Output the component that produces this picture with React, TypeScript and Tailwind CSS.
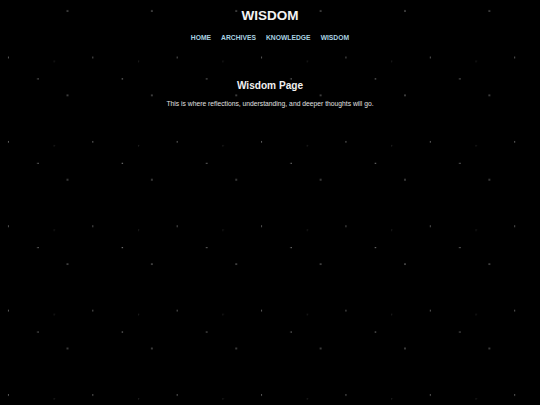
const links = ['HOME', 'ARCHIVES', 'KNOWLEDGE', 'WISDOM'];

export default function App() {
  return (
    <div className="min-h-screen bg-black bg-[radial-gradient(0.8px_1.3px_at_67.5px_11px,#d0d0d0,transparent),radial-gradient(1px_1px_at_8.5px_57.5px,#aaaaaa,transparent),radial-gradient(0.8px_0.8px_at_54.5px_61.5px,#777777,transparent),radial-gradient(1.1px_0.9px_at_38px_79px,#aaaaaa,transparent)] bg-size-[84.375px_84.375px] font-['Liberation_Sans',Arial,sans-serif] text-center">
      <header className="pt-[8px]">
        <h1 className="text-[13.5px] leading-[16px] font-bold text-[#f2f2f2]">WISDOM</h1>
        <nav className="mt-[10px] flex justify-center gap-[10px] text-[6.75px] leading-[8px] font-bold text-[#a9d2e0]">
          {links.map((l) => (
            <a key={l} href="#">
              {l}
            </a>
          ))}
        </nav>
      </header>
      <main>
        <h2 className="mt-[38px] text-[10.125px] leading-[12px] font-bold text-[#f0f0f0]">Wisdom Page</h2>
        <p className="mt-[8px] text-[6.75px] leading-[8px] text-[#e0e0e0]">
          This is where reflections, understanding, and deeper thoughts will go.
        </p>
      </main>
    </div>
  );
}
